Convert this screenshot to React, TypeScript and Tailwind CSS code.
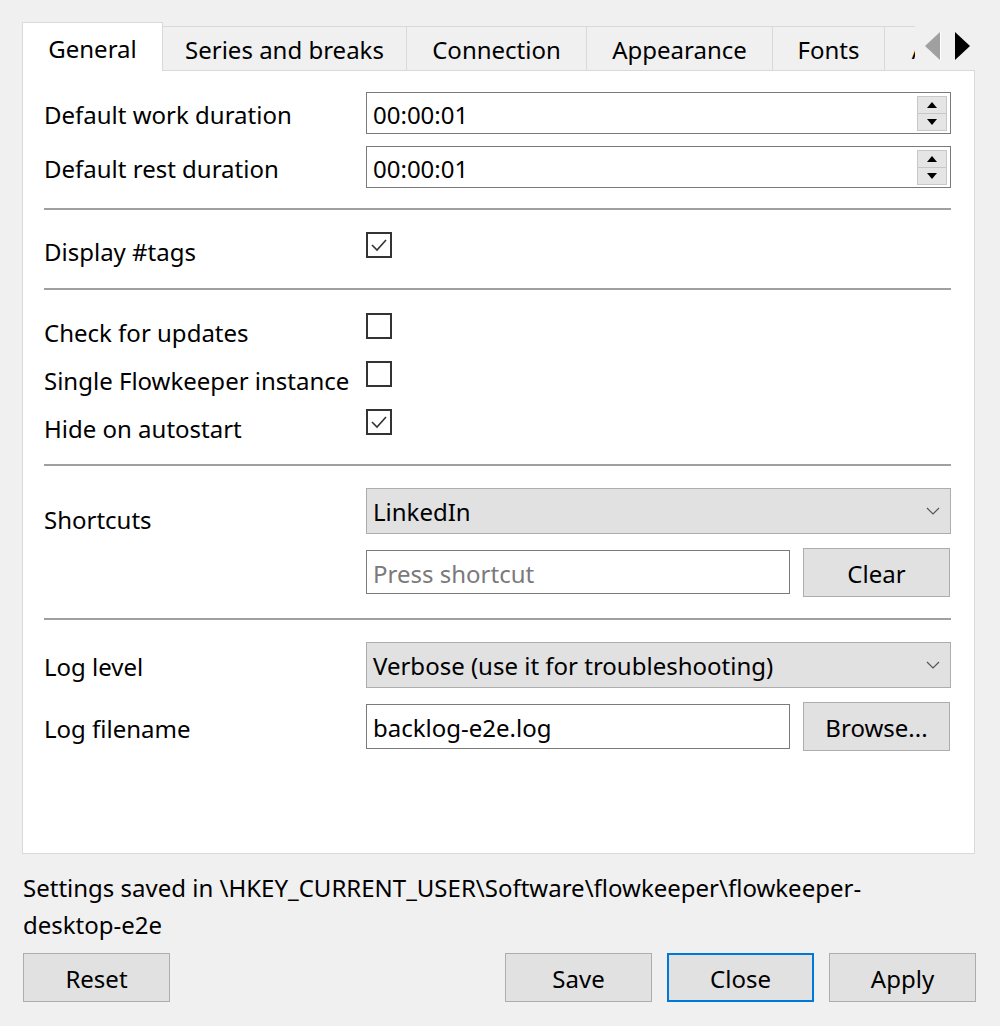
import React from "react";

function Spin({ value }: { value: string }) {
  return (
    <div className="flex items-center h-[42px] w-[585px] border border-[#7a7a7a] bg-white pl-[6px] pr-[3px]">
      <span className="flex-1 pt-[3px]">{value}</span>
      <div className="flex flex-col w-[30px] h-[35px] border border-[#c8c8c8] bg-[#e5e5e5]">
        <div className="flex-1 flex items-center justify-center border-b border-[#c8c8c8]">
          <svg width="10" height="6" viewBox="0 0 10 6"><polygon points="0,6 10,6 5,0" fill="#000" /></svg>
        </div>
        <div className="flex-1 flex items-center justify-center">
          <svg width="10" height="6" viewBox="0 0 10 6"><polygon points="0,0 10,0 5,6" fill="#000" /></svg>
        </div>
      </div>
    </div>
  );
}

function Check({ checked }: { checked: boolean }) {
  return (
    <div className="w-[26px] h-[26px] border-2 border-[#333333] bg-white flex items-center justify-center">
      {checked && (
        <svg width="20" height="20" viewBox="0 0 20 20">
          <polyline points="3,10 8,15 17,5" fill="none" stroke="#333" strokeWidth="1.6" />
        </svg>
      )}
    </div>
  );
}

function Combo({ value }: { value: string }) {
  return (
    <div className="flex items-center h-[46px] w-[585px] border border-[#adadad] bg-[#e1e1e1] pl-[6px] pr-[10px]">
      <span className="flex-1 pt-[2px]">{value}</span>
      <svg width="14" height="8" viewBox="0 0 14 8"><polyline points="1,1 7,7 13,1" fill="none" stroke="#555" strokeWidth="1.2" /></svg>
    </div>
  );
}

function Btn({ label, focused }: { label: string; focused?: boolean }) {
  return (
    <div
      className={
        focused
          ? "w-[147px] h-[49px] border-2 border-[#0078d7] bg-[#e1e1e1] flex items-center justify-center pt-[3px]"
          : "w-[147px] h-[49px] border border-[#adadad] bg-[#e1e1e1] flex items-center justify-center pt-[3px]"
      }
    >
      {label}
    </div>
  );
}

function Sep() {
  return <div className="h-[2px] bg-[#a0a0a0] w-full" />;
}

export default function App() {
  const tabs = [
    { t: "Series and breaks", w: "w-[244px]" },
    { t: "Connection", w: "w-[180px]" },
    { t: "Appearance", w: "w-[186px]" },
    { t: "Fonts", w: "w-[112px]" },
    { t: "Audio", w: "w-[120px]" },
  ];
  return (
    <div className="w-[1000px] h-[1026px] bg-[#f0f0f0] text-black text-[24px] font-['Noto_Sans',sans-serif] overflow-hidden">
      {/* Tab bar */}
      <div className="flex items-start h-[49px] pt-[22px] box-content">
        <div className="ml-[22px] w-[893px] overflow-hidden flex items-start shrink-0">
          <div className="relative z-10 w-[141px] h-[49px] shrink-0 bg-white border-l border-t border-r border-[#d9d9d9] flex items-center justify-center pt-[4px]">
            General
          </div>
          {tabs.map((tb) => (
            <div
              key={tb.t}
              className={`${tb.w} shrink-0 mt-[4px] h-[44px] border-t border-r border-[#d9d9d9] bg-[#f0f0f0] flex items-center justify-center whitespace-nowrap pt-[2px]`}
            >
              {tb.t}
            </div>
          ))}
        </div>
        <div className="flex items-center ml-[10px] mt-[10px] gap-[14px]">
          <svg width="16" height="28" viewBox="0 0 16 28">
            <polygon points="15,0 15,28 0,14" fill="#a0a0a0" />
            <line x1="15.5" y1="0" x2="15.5" y2="28" stroke="#fff" strokeWidth="1" />
          </svg>
          <svg width="15" height="28" viewBox="0 0 15 28">
            <polygon points="0,0 0,28 15,14" fill="#000" />
          </svg>
        </div>
      </div>

      {/* Pane */}
      <div className="relative -mt-[1px] ml-[22px] w-[953px] h-[784px] border border-[#d9d9d9] bg-white pl-[21px] pr-[23px] pt-[21px]">
        <div className="flex items-center h-[42px]">
          <div className="w-[322px] pt-[4px] whitespace-nowrap">Default work duration</div>
          <Spin value="00:00:01" />
        </div>
        <div className="flex items-center h-[42px] mt-[12px]">
          <div className="w-[322px] pt-[4px] whitespace-nowrap">Default rest duration</div>
          <Spin value="00:00:01" />
        </div>
        <div className="mt-[20px]"><Sep /></div>

        <div className="flex items-center h-[26px] mt-[22px]">
          <div className="w-[322px] pt-[14px]">Display #tags</div>
          <Check checked />
        </div>
        <div className="mt-[30px]"><Sep /></div>

        <div className="flex items-center h-[26px] mt-[23px]">
          <div className="w-[322px] pt-[14px]">Check for updates</div>
          <Check checked={false} />
        </div>
        <div className="flex items-center h-[26px] mt-[22px]">
          <div className="w-[322px] pt-[14px] whitespace-nowrap">Single Flowkeeper instance</div>
          <Check checked={false} />
        </div>
        <div className="flex items-center h-[26px] mt-[22px]">
          <div className="w-[322px] pt-[14px]">Hide on autostart</div>
          <Check checked />
        </div>
        <div className="mt-[29px]"><Sep /></div>

        <div className="flex mt-[22px]">
          <div className="w-[322px] pt-[14px]">Shortcuts</div>
          <div className="flex flex-col">
            <Combo value="LinkedIn" />
            <div className="flex items-center h-[50px] mt-[13px]">
              <div className="w-[424px] h-[44px] border border-[#7a7a7a] bg-white flex items-center pl-[6px] pt-[3px] text-[#7a7a7a]">
                Press shortcut
              </div>
              <div className="ml-[13px]"><Btn label="Clear" /></div>
            </div>
          </div>
        </div>
        <div className="mt-[21px]"><Sep /></div>

        <div className="flex items-center h-[46px] mt-[22px]">
          <div className="w-[322px] pt-[4px]">Log level</div>
          <Combo value="Verbose (use it for troubleshooting)" />
        </div>
        <div className="flex items-center h-[50px] mt-[13px]">
          <div className="w-[322px] pt-[6px]">Log filename</div>
          <div className="w-[424px] h-[45px] border border-[#7a7a7a] bg-white flex items-center pl-[6px] pt-[3px]">
            backlog-e2e.log
          </div>
          <div className="ml-[13px]"><Btn label="Browse..." /></div>
        </div>
      </div>

      {/* Footer */}
      <div className="ml-[23px] mt-[15px] leading-[37px] whitespace-nowrap">
        Settings saved in \HKEY_CURRENT_USER\Software\flowkeeper\flowkeeper-
        <br />
        desktop-e2e
      </div>
      <div className="flex mt-[10px] ml-[23px] w-[953px]">
        <Btn label="Reset" />
        <div className="flex-1" />
        <div className="flex gap-[15px]">
          <Btn label="Save" />
          <Btn label="Close" focused />
          <Btn label="Apply" />
        </div>
      </div>
    </div>
  );
}
